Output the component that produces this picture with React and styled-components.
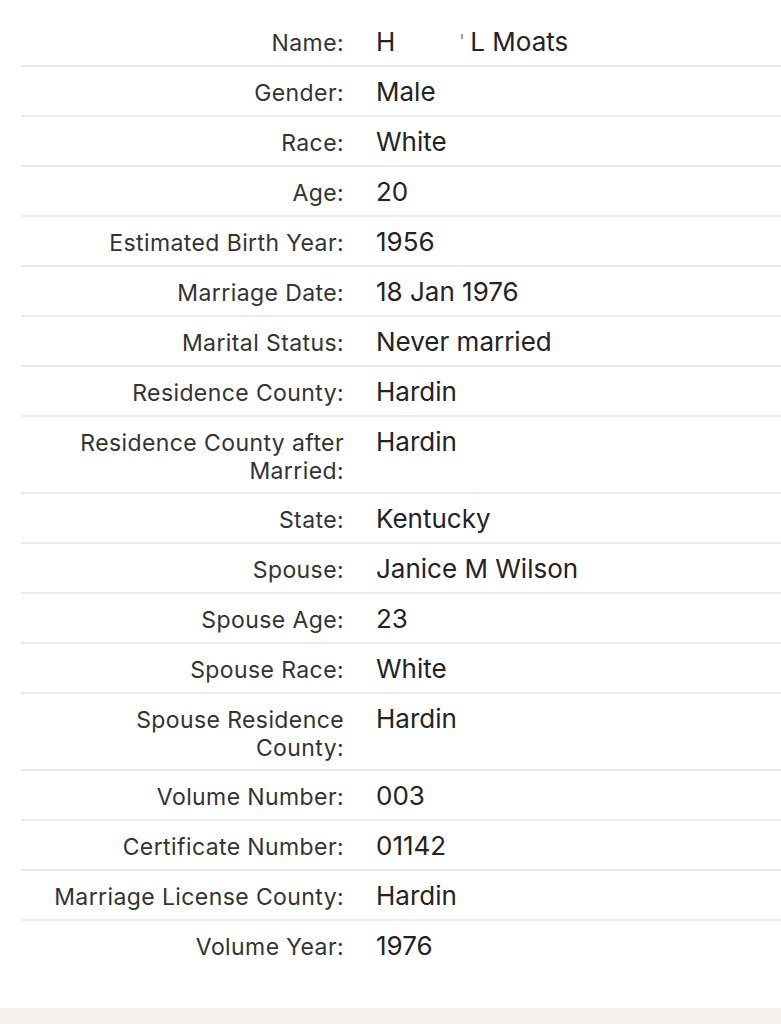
import React from 'react'
import styled, { createGlobalStyle } from 'styled-components'

const records = [
  ['Gender:', 'Male'],
  ['Race:', 'White'],
  ['Age:', '20'],
  ['Estimated Birth Year:', '1956'],
  ['Marriage Date:', '18 Jan 1976'],
  ['Marital Status:', 'Never married'],
  ['Residence County:', 'Hardin'],
  ['Residence County after Married:', 'Hardin'],
  ['State:', 'Kentucky'],
  ['Spouse:', 'Janice M Wilson'],
  ['Spouse Age:', '23'],
  ['Spouse Race:', 'White'],
  ['Spouse Residence County:', 'Hardin'],
  ['Volume Number:', '003'],
  ['Certificate Number:', '01142'],
  ['Marriage License County:', 'Hardin'],
  ['Volume Year:', '1976']
]

export default () =>
  <Page>
    <GlobalStyle />
    <Details>
      <Row>
        <Label>Name:</Label>
        <Value>
          H<Redacted />L Moats
        </Value>
      </Row>
      {records.map(([label, value]) =>
        <Row key={label}>
          <Label>{label}</Label>
          <Value>{value}</Value>
        </Row>
      )}
    </Details>
    <Footer />
  </Page>

const GlobalStyle = createGlobalStyle`
  html, body {
    margin: 0;
    padding: 0;
    background: #fff;
  }

  body {
    font-family: Inter, "Liberation Sans", sans-serif;
    -webkit-font-smoothing: antialiased;
  }
`

const Page = styled.div`
  display: flex;
  flex-direction: column;
  min-height: 100vh;
`

const Details = styled.dl`
  flex-grow: 1;
  margin: 0;
  padding: 17px 0 0 21px;
`

const Row = styled.div`
  display: grid;
  grid-template-columns: 298px 1fr;
  column-gap: 32px;
  align-items: baseline;
  padding: 8px 0 7px 25px;
  border-bottom: 2px solid #ebebeb;

  &:last-child {
    border-bottom: none;
  }
`

const Label = styled.dt`
  margin: 0;
  text-align: right;
  font-size: 23px;
  line-height: 28px;
  letter-spacing: 0.4px;
  color: #333;
`

const Value = styled.dd`
  margin: 0;
  font-size: 26px;
  line-height: 33px;
  color: #232323;
`

const Redacted = styled.span`
  position: relative;
  display: inline-block;
  width: 75px;

  &::after {
    content: '';
    position: absolute;
    right: 7px;
    top: -17px;
    width: 2px;
    height: 5px;
    background-color: #9a9a9a;
  }
`

const Footer = styled.div`
  height: 16px;
  background-color: #f4f1ed;
`
